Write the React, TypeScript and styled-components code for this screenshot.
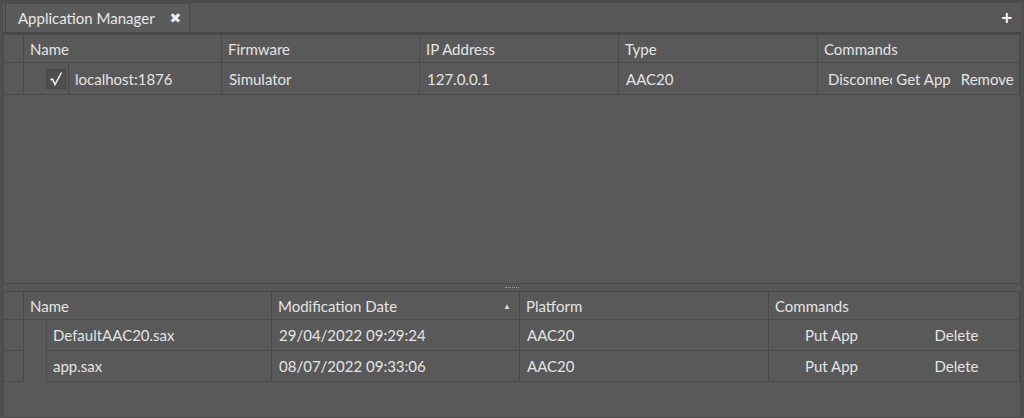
import styled, { createGlobalStyle } from "styled-components";

const GlobalStyle = createGlobalStyle`
  html, body {
    margin: 0;
    padding: 0;
    background: #585858;
  }
  * {
    box-sizing: border-box;
  }
`;

const Window = styled.div`
  width: 1024px;
  height: 418px;
  background: #595959;
  border-top: 3px solid #4b4b4b;
  border-left: 3px solid #4f4f4f;
  border-right: 3px solid #4f4f4f;
  display: flex;
  flex-direction: column;
  font-family: Lato, "Open Sans", sans-serif;
  font-size: 15px;
  color: #e4e4e4;
  overflow: hidden;
`;

const TabBar = styled.div`
  height: 31px;
  display: flex;
  align-items: flex-end;
  padding-left: 2px;
  border-bottom: 2px solid #474747;
  background: #575757;
`;

const Tab = styled.div`
  height: 29px;
  display: flex;
  align-items: center;
  gap: 15px;
  padding: 0 8px 0 12px;
  background: #5b5b5b;
  border: 1px solid #494949;
  border-bottom: none;
  color: #e8e8e8;
`;

const CloseMark = styled.span`
  font-family: "DejaVu Sans", sans-serif;
  font-weight: bold;
  font-size: 14px;
  color: #ececec;
`;

const PlusButton = styled.span`
  margin-left: auto;
  align-self: center;
  margin-right: 8px;
  font-family: "DejaVu Sans", sans-serif;
  font-weight: bold;
  font-size: 15px;
  color: #ffffff;
`;

const Panel = styled.div<{ $height?: number }>`
  border: 1px solid #4a4a4a;
  ${(p) => (p.$height ? `height: ${p.$height}px;` : "flex: 1;")}
  background: #595959;
`;

const Splitter = styled.div`
  height: 7px;
  display: flex;
  justify-content: center;
  align-items: center;
  background: #575757;
`;

const Grip = styled.div`
  width: 14px;
  height: 1px;
  border-top: 1px dotted #9a9a9a;
`;

const Grid = styled.div<{ $cols: string }>`
  display: grid;
  grid-template-columns: ${(p) => p.$cols};
`;

const HeadCell = styled.div`
  height: 28px;
  display: flex;
  align-items: center;
  padding-left: 6px;
  border-right: 1px solid #4b4b4b;
  border-bottom: 1px solid #4b4b4b;
  white-space: nowrap;
  overflow: hidden;
`;

const SortArrow = styled.span`
  margin-left: auto;
  margin-right: 8px;
  font-size: 8px;
  color: #d8d8d8;
`;

const Cell = styled.div<{ $h: number }>`
  height: ${(p) => p.$h}px;
  display: flex;
  align-items: center;
  padding-left: 7px;
  border-right: 1px solid #4b4b4b;
  border-bottom: 1px solid #4b4b4b;
  white-space: nowrap;
  overflow: hidden;
`;

const RowHeader = styled.div<{ $h: number }>`
  height: ${(p) => p.$h}px;
  border-right: 1px solid #4b4b4b;
  border-bottom: 1px solid #4b4b4b;
`;

const NameCell = styled.div<{ $h: number; $indent: number; $lined: boolean }>`
  height: ${(p) => p.$h}px;
  display: flex;
  border-right: 1px solid #4b4b4b;
  border-bottom: ${(p) => (p.$lined ? "1px solid #4b4b4b" : "none")};
  padding-left: ${(p) => p.$indent}px;
`;

const CheckSlot = styled.div`
  width: 44px;
  display: flex;
  align-items: center;
  justify-content: flex-end;
  padding-right: 2px;
`;

const CheckBox = styled.div`
  width: 20px;
  height: 20px;
  background: #4e4e4e;
  border: 1px solid #474747;
  display: flex;
  align-items: center;
  justify-content: center;
`;

const NameInner = styled.div<{ $lined: boolean }>`
  flex: 1;
  display: flex;
  align-items: center;
  padding-left: 6px;
  border-left: 1px solid #4b4b4b;
  border-bottom: ${(p) => (p.$lined ? "1px solid #4b4b4b" : "none")};
  white-space: nowrap;
`;

const Commands = styled.div<{ $h: number }>`
  height: ${(p) => p.$h}px;
  display: flex;
  border-bottom: 1px solid #4b4b4b;
  border-right: 1px solid #4b4b4b;
`;

const CmdButton = styled.div`
  flex: 1 1 0;
  display: flex;
  align-items: center;
  justify-content: center;
  overflow: hidden;
  white-space: nowrap;
  min-width: 0;
`;

const ClipButton = styled(CmdButton)`
  justify-content: flex-start;
  padding-left: 10px;
`;

const TOP_COLS = "20px 198px 198px 199px 199px 1fr";
const BOTTOM_COLS = "20px 248px 248px 249px 1fr";

const files = [
  { name: "DefaultAAC20.sax", date: "29/04/2022 09:29:24", platform: "AAC20" },
  { name: "app.sax", date: "08/07/2022 09:33:06", platform: "AAC20" },
];

const Check = () => (
  <svg width="16" height="16" viewBox="0 0 16 16">
    <path
      d="M2.5 9 L4.5 8 L7 13.5 L13.5 1.5"
      fill="none"
      stroke="#f0f0f0"
      strokeWidth="1.5"
      strokeLinejoin="miter"
    />
  </svg>
);

export default function App() {
  return (
    <>
      <GlobalStyle />
      <Window>
        <TabBar>
          <Tab>
            Application Manager
            <CloseMark>✖</CloseMark>
          </Tab>
          <PlusButton>+</PlusButton>
        </TabBar>

        <Panel $height={250}>
          <Grid $cols={TOP_COLS}>
            <HeadCell />
            <HeadCell>Name</HeadCell>
            <HeadCell>Firmware</HeadCell>
            <HeadCell>IP Address</HeadCell>
            <HeadCell>Type</HeadCell>
            <HeadCell>Commands</HeadCell>

            <RowHeader $h={32} />
            <NameCell $h={32} $indent={0} $lined={true}>
              <CheckSlot>
                <CheckBox>
                  <Check />
                </CheckBox>
              </CheckSlot>
              <NameInner $lined={false}>localhost:1876</NameInner>
            </NameCell>
            <Cell $h={32}>Simulator</Cell>
            <Cell $h={32}>127.0.0.1</Cell>
            <Cell $h={32}>AAC20</Cell>
            <Commands $h={32}>
              <ClipButton>Disconnect</ClipButton>
              <CmdButton>Get App</CmdButton>
              <CmdButton>Remove</CmdButton>
            </Commands>
          </Grid>
        </Panel>

        <Splitter>
          <Grip />
        </Splitter>

        <Panel>
          <Grid $cols={BOTTOM_COLS}>
            <HeadCell />
            <HeadCell>Name</HeadCell>
            <HeadCell>
              Modification Date
              <SortArrow>▲</SortArrow>
            </HeadCell>
            <HeadCell>Platform</HeadCell>
            <HeadCell>Commands</HeadCell>

            {files.map((f) => (
              <>
                <RowHeader $h={31} key={f.name + "h"} />
                <NameCell $h={31} $indent={22} $lined={false} key={f.name + "n"}>
                  <NameInner $lined={true}>{f.name}</NameInner>
                </NameCell>
                <Cell $h={31} key={f.name + "d"}>{f.date}</Cell>
                <Cell $h={31} key={f.name + "p"}>{f.platform}</Cell>
                <Commands $h={31} key={f.name + "c"}>
                  <CmdButton>Put App</CmdButton>
                  <CmdButton>Delete</CmdButton>
                </Commands>
              </>
            ))}
          </Grid>
        </Panel>
      </Window>
    </>
  );
}
